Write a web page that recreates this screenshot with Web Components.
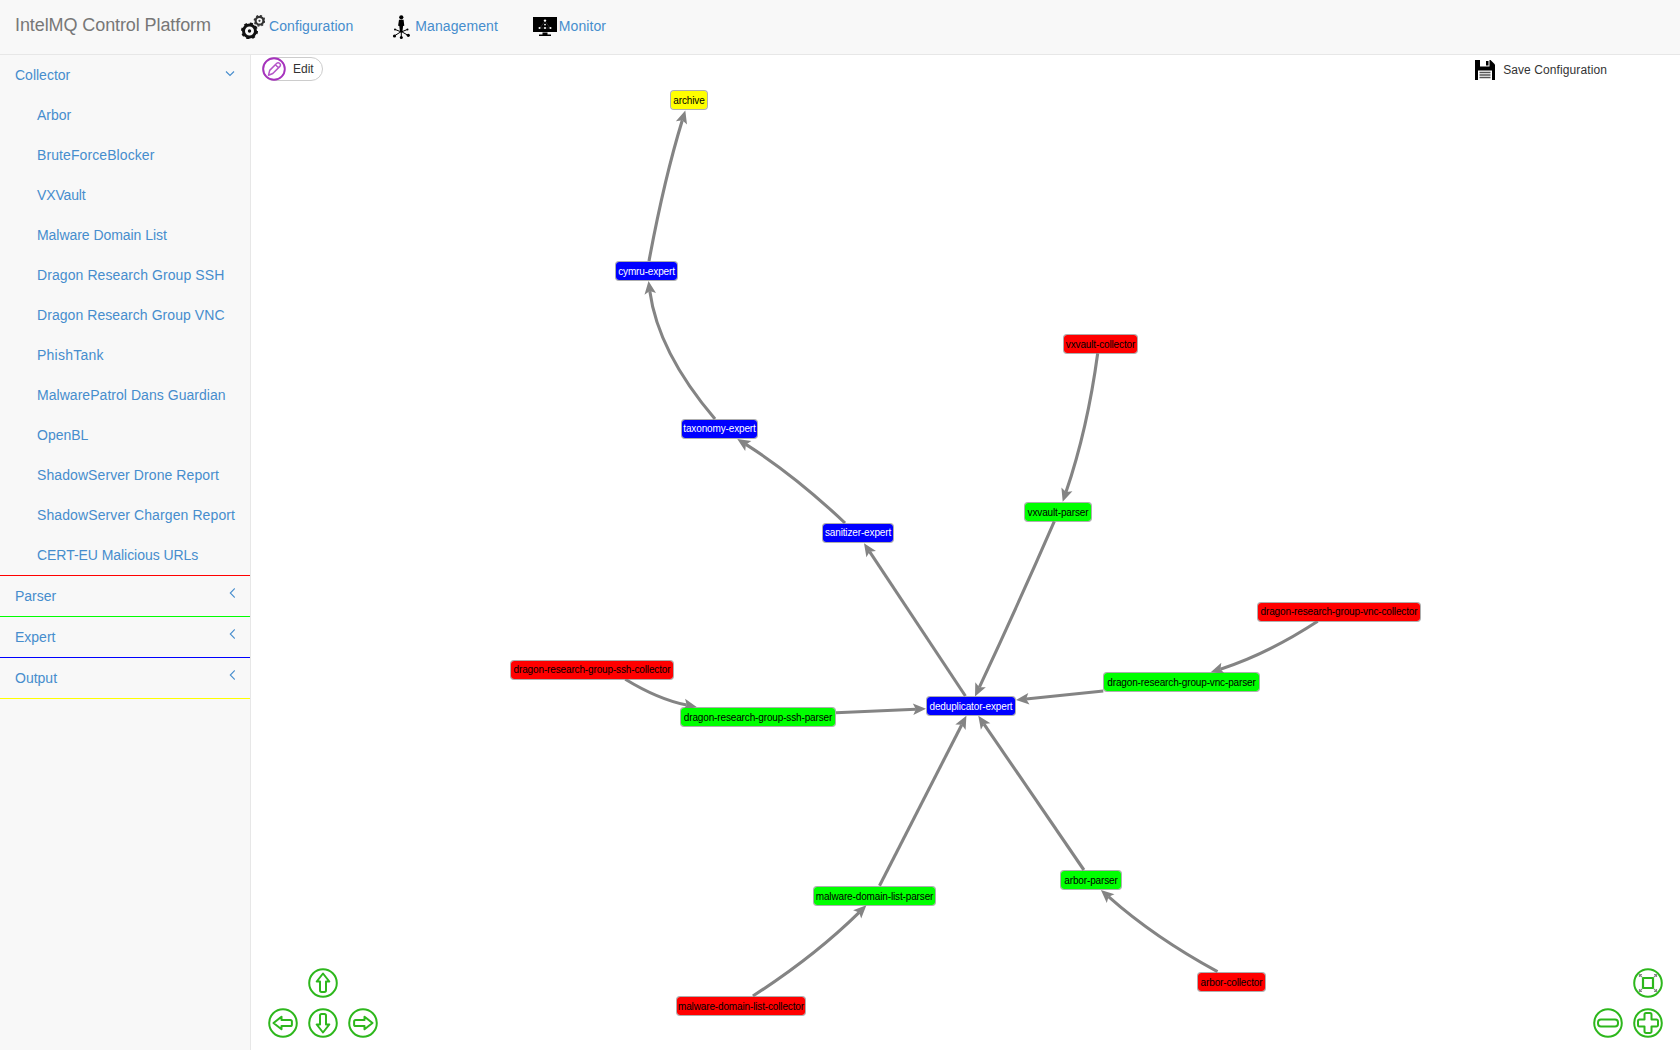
<!DOCTYPE html>
<html>
<head>
<meta charset="utf-8">
<title>IntelMQ Control Platform</title>
<style>
  html, body { margin: 0; height: 100%; background: #fff; overflow: hidden; }
  body { font: 14px/20px "Liberation Sans", Arial, sans-serif; color: #333; }
</style>
</head>
<body>
<app-shell>
  <top-navbar slot="top" brand="IntelMQ Control Platform">
    <nav-link width="24">
      <svg slot="icon" width="24" height="24" viewBox="0 0 24 24">
        <g fill="none" transform="translate(.5 0)">
          <circle cx="8" cy="16" r="6" stroke="#111" stroke-width="3"/>
          <circle cx="8" cy="16" r="7.6" stroke="#111" stroke-width="1.8" stroke-dasharray="3 3"/>
          <circle cx="8" cy="16" r="1.7" fill="#111"/>
          <circle cx="18" cy="5.8" r="3.9" stroke="#333" stroke-width="2.2"/>
          <circle cx="18" cy="5.8" r="5.2" stroke="#333" stroke-width="1.4" stroke-dasharray="2 2.08"/>
          <circle cx="18" cy="5.8" r="1.1" fill="#444"/>
        </g>
      </svg>
      Configuration
    </nav-link>
    <nav-link width="28">
      <svg slot="icon" width="29" height="24" viewBox="0 0 29 24">
        <g transform="translate(2 0)">
          <circle cx="16.3" cy="2.3" r="2.1" fill="#000"/>
          <path d="M14 4.8h4.6l.7 6-1.2.3-.7 6h-2.4l-.7-6-1.2-.3z" fill="#000"/>
          <path d="M16.3 16.5 10 20.5M16.3 16.5V22.5M16.3 16.5 22.5 20M16.3 17 10.5 14.6M16.3 17 22 14.6" stroke="#000" stroke-width="1" fill="none"/>
          <g fill="#000">
            <circle cx="9.5" cy="21" r="1.6"/><circle cx="16.3" cy="22.4" r="1.5"/><circle cx="23.3" cy="20.3" r="1.6"/>
            <circle cx="10" cy="14.6" r="1"/><circle cx="22.5" cy="14.4" r="1"/>
          </g>
        </g>
      </svg>
      Management
    </nav-link>
    <nav-link width="27">
      <svg slot="icon" width="29" height="24" viewBox="0 0 29 24">
        <rect x="5" y="2" width="24" height="15" fill="#000"/>
        <path d="M14.5 17.5h5v2h3.5v1.5H11V19.5h3.5z" fill="#000"/>
        <path d="M17 6 12 13M17 6 22 13M12 13H22" stroke="#444" stroke-width=".6"/>
        <g fill="#fff">
          <circle cx="17" cy="5.6" r="1.2"/><circle cx="17" cy="9.6" r=".9"/>
          <circle cx="11.5" cy="13" r="1"/><circle cx="17" cy="13" r="1"/><circle cx="22.5" cy="13" r="1"/>
        </g>
      </svg>
      Monitor
    </nav-link>
  </top-navbar>

  <side-menu slot="side">
    <menu-group label="Collector" color="#ff0000" open>
      <menu-item>Arbor</menu-item>
      <menu-item track=".09">BruteForceBlocker</menu-item>
      <menu-item track="-.15">VXVault</menu-item>
      <menu-item track="-.05">Malware Domain List</menu-item>
      <menu-item track=".085">Dragon Research Group SSH</menu-item>
      <menu-item track=".065">Dragon Research Group VNC</menu-item>
      <menu-item track=".23">PhishTank</menu-item>
      <menu-item track=".04">MalwarePatrol Dans Guardian</menu-item>
      <menu-item>OpenBL</menu-item>
      <menu-item track=".085">ShadowServer Drone Report</menu-item>
      <menu-item track=".1">ShadowServer Chargen Report</menu-item>
      <menu-item track="-.05">CERT-EU Malicious URLs</menu-item>
    </menu-group>
    <menu-group label="Parser" color="#00ff00"></menu-group>
    <menu-group label="Expert" color="#0000ff"></menu-group>
    <menu-group label="Output" color="#ffff00"></menu-group>
  </side-menu>

  <network-canvas slot="main">
    <graph-node box="670,90,38,20" kind="output">archive</graph-node>
    <graph-node box="615,261,63,20" kind="expert">cymru-expert</graph-node>
    <graph-node box="681,419,77,20" kind="expert" flush>taxonomy-expert</graph-node>
    <graph-node box="822,523,72,20" kind="expert" flush>sanitizer-expert</graph-node>
    <graph-node box="926,696,90,20" kind="expert">deduplicator-expert</graph-node>
    <graph-node box="1063,334,75,20" kind="collector">vxvault-collector</graph-node>
    <graph-node box="1024,502,68,20" kind="parser">vxvault-parser</graph-node>
    <graph-node box="1257,602,164,20" kind="collector" flush>dragon-research-group-vnc-collector</graph-node>
    <graph-node box="1103,672,157,20" kind="parser">dragon-research-group-vnc-parser</graph-node>
    <graph-node box="510,660,164,20" kind="collector" flush>dragon-research-group-ssh-collector</graph-node>
    <graph-node box="680,707,156,20" kind="parser">dragon-research-group-ssh-parser</graph-node>
    <graph-node box="813,886,123,20" kind="parser">malware-domain-list-parser</graph-node>
    <graph-node box="676,996,130,20" kind="collector">malware-domain-list-collector</graph-node>
    <graph-node box="1060,870,62,20" kind="parser">arbor-parser</graph-node>
    <graph-node box="1197,972,69,20" kind="collector">arbor-collector</graph-node>

    <edit-pill slot="overlay"></edit-pill>
    <save-action slot="overlay"></save-action>

    <control-pad slot="overlay" side="left">
      <span></span><round-btn icon="up"></round-btn><span></span>
      <round-btn icon="left"></round-btn><round-btn icon="down"></round-btn><round-btn icon="right"></round-btn>
    </control-pad>
    <control-pad slot="overlay" side="right">
      <span></span><round-btn icon="fit"></round-btn>
      <round-btn icon="minus"></round-btn><round-btn icon="plus"></round-btn>
    </control-pad>
  </network-canvas>
</app-shell>

<script>
class AppShell extends HTMLElement {
  constructor() {
    super();
    this.attachShadow({ mode: 'open' }).innerHTML = `
      <style>
        :host { display: flex; flex-direction: column; width: 1680px; height: 1050px; overflow: hidden; }
        .body { display: flex; flex: 1; min-height: 0; }
        ::slotted([slot=side]) { flex: none; }
        ::slotted([slot=main]) { flex: 1; }
      </style>
      <slot name="top"></slot>
      <div class="body"><slot name="side"></slot><slot name="main"></slot></div>`;
  }
}

class TopNavbar extends HTMLElement {
  constructor() {
    super();
    this.attachShadow({ mode: 'open' }).innerHTML = `
      <style>
        :host { display: flex; height: 54px; background: #f8f8f8; border-bottom: 1px solid #e7e7e7; }
        .brand { width: 196px; padding: 15px; font-size: 18px; line-height: 20px; color: #777; white-space: nowrap; letter-spacing: -.09px; }
        nav { display: flex; }
      </style>
      <div class="brand"></div>
      <nav><slot></slot></nav>`;
    this.shadowRoot.querySelector('.brand').textContent = this.getAttribute('brand');
  }
}

class NavLink extends HTMLElement {
  constructor() {
    super();
    const w = this.getAttribute('width') || 24;
    this.attachShadow({ mode: 'open' }).innerHTML = `
      <style>
        :host { display: flex; padding: 15px 15px 0; height: 39px; color: #468dcd; font-size: 14px; line-height: 20px; white-space: nowrap; letter-spacing: .08px; }
        .ico { width: ${w}px; height: 24px; margin-right: 4px; flex: none; }
        .txt { padding-top: 1px; }
      </style>
      <div class="ico"><slot name="icon"></slot></div>
      <div class="txt"><slot></slot></div>`;
  }
}

class SideMenu extends HTMLElement {
  constructor() {
    super();
    this.attachShadow({ mode: 'open' }).innerHTML = `
      <style>
        :host { display: block; width: 250px; background: #f8f8f8; border-right: 1px solid #e7e7e7; }
      </style>
      <slot></slot>`;
  }
}

class MenuGroup extends HTMLElement {
  constructor() {
    super();
    const open = this.hasAttribute('open');
    const arrow = open
      ? '<path d="M1 1.5 5 5.5 9 1.5"/>'
      : '<path d="M6.8 .5 2.3 5 6.8 9.5"/>';
    this.attachShadow({ mode: 'open' }).innerHTML = `
      <style>
        :host { display: block; border-bottom: 1px solid ${this.getAttribute('color')}; }
        .head { display: flex; justify-content: space-between; height: 20px; padding: 10px 15px; color: #468dcd; }
        svg { margin-top: ${open ? 5 : 2}px; fill: none; stroke: #468dcd; stroke-width: 1.1; }
        .list { display: ${open ? 'block' : 'none'}; }
      </style>
      <div class="head">
        <span class="label"></span>
        <svg width="${open ? 10 : 7}" height="${open ? 7 : 10}" viewBox="0 0 ${open ? '10 7' : '7 10'}">${arrow}</svg>
      </div>
      <div class="list"><slot></slot></div>`;
    this.shadowRoot.querySelector('.label').textContent = this.getAttribute('label');
  }
}

class MenuItem extends HTMLElement {
  constructor() {
    super();
    const track = this.getAttribute('track') || '0';
    this.attachShadow({ mode: 'open' }).innerHTML = `
      <style>
        :host { display: block; height: 20px; padding: 10px 15px 10px 37px; color: #468dcd; white-space: nowrap; letter-spacing: ${track}px; }
      </style>
      <slot></slot>`;
  }
}

// edges in page coordinates: start, control (null = straight), arrow tip
const EDGES = [
  [[649, 261], [664, 180], [685.3, 110.5]],
  [[715, 419], [658, 352], [648.5, 281]],
  [[845, 523], [795, 475.6], [737.3, 439]],
  [[965.4, 696], null, [864, 543.3]],
  [[1054.3, 521.3], [1016.5, 608], [975, 696.5]],
  [[1097.7, 353.3], [1087.5, 429.2], [1062.7, 501.7]],
  [[1103.3, 691], null, [1016, 700]],
  [[1317.7, 621.3], [1267.5, 654], [1210.7, 672.3]],
  [[836, 712.7], null, [926, 708.7]],
  [[625.3, 679.3], [658.4, 699.5], [696.7, 707]],
  [[879.5, 885.7], null, [966.4, 715.7]],
  [[1083.9, 870], null, [978.3, 715.7]],
  [[752.9, 996], [814.3, 956.5], [866.4, 905.3]],
  [[1217.5, 971.7], [1154.4, 937.5], [1100.9, 890]],
];
const ORIGIN = [251, 55];

function edgeMarkup([a, c, b]) {
  const ctrl = c || a;
  const dx = b[0] - ctrl[0], dy = b[1] - ctrl[1];
  const len = Math.hypot(dx, dy);
  const ux = dx / len, uy = dy / len;
  const L = 13, W = 5.8;
  const back = [b[0] - ux * L, b[1] - uy * L];
  const notch = [b[0] - ux * L * 0.78, b[1] - uy * L * 0.78];
  const p1 = [back[0] - uy * W, back[1] + ux * W];
  const p2 = [back[0] + uy * W, back[1] - ux * W];
  const fmt = (p) => p[0].toFixed(1) + ' ' + p[1].toFixed(1);
  const d = c
    ? `M${fmt(a)} Q${fmt(c)} ${fmt(notch)}`
    : `M${fmt(a)} L${fmt(notch)}`;
  return `<path d="${d}" fill="none" stroke="#848484" stroke-width="3.1"/>
    <path d="M${fmt(b)} L${fmt(p1)} L${fmt(notch)} L${fmt(p2)}Z" fill="#848484"/>`;
}

class NetworkCanvas extends HTMLElement {
  constructor() {
    super();
    this.attachShadow({ mode: 'open' }).innerHTML = `
      <style>
        :host { display: block; position: relative; background: #fff; overflow: hidden; }
        svg { position: absolute; left: 0; top: 0; }
      </style>
      <svg width="1429" height="995" viewBox="${ORIGIN[0]} ${ORIGIN[1]} 1429 995">${EDGES.map(edgeMarkup).join('')}</svg>
      <slot></slot>
      <slot name="overlay"></slot>`;
  }
}

const NODE_COLORS = {
  collector: ['#ff0000', '#000'],
  parser: ['#00ff00', '#000'],
  expert: ['#0000ff', '#fff'],
  output: ['#ffff00', '#000'],
};

class GraphNode extends HTMLElement {
  constructor() {
    super();
    const [x, y, w, h] = this.getAttribute('box').split(',').map(Number);
    const [bg, fg] = NODE_COLORS[this.getAttribute('kind')];
    const nudge = this.hasAttribute('flush') ? 0 : 1;
    this.attachShadow({ mode: 'open' }).innerHTML = `
      <style>
        :host {
          position: absolute; box-sizing: border-box; display: flex; align-items: center; justify-content: center;
          left: ${x - ORIGIN[0]}px; top: ${y - ORIGIN[1]}px; width: ${w}px; height: ${h}px; padding-top: ${nudge}px;
          background: ${bg}; color: ${fg}; border: 1px solid rgba(130,130,130,.65); border-radius: 4px;
          background-clip: padding-box;
          font: 10px/12px "Liberation Sans", Arial, sans-serif; letter-spacing: -.14px; white-space: nowrap;
        }
      </style>
      <slot></slot>`;
  }
}

class EditPill extends HTMLElement {
  constructor() {
    super();
    this.attachShadow({ mode: 'open' }).innerHTML = `
      <style>
        :host {
          position: absolute; left: 11px; top: 2px; box-sizing: border-box; width: 61px; height: 24px;
          display: flex; align-items: center; background: #fff; border: 1px solid #ccc; border-radius: 12px;
          font-size: 12px; color: #333;
        }
        svg { position: absolute; left: -1px; top: -1px; }
        span { margin-left: 30px; }
      </style>
      <svg width="24" height="24" viewBox="0 0 24 24">
        <circle cx="12" cy="12" r="10.8" fill="#fff" stroke="#a632bd" stroke-width="1.9"/>
        <path d="M6.5 18.3 7.7 13.4 14.8 6.3a1.8 1.8 0 0 1 2.6 0l.5.5a1.8 1.8 0 0 1 0 2.6l-7.1 7.1zM13.4 7.7 16.5 10.8" fill="none" stroke="#b455c8" stroke-width="1.5" stroke-linejoin="round"/>
      </svg>
      <span>Edit</span>`;
  }
}

class SaveAction extends HTMLElement {
  constructor() {
    super();
    this.attachShadow({ mode: 'open' }).innerHTML = `
      <style>
        :host {
          position: absolute; right: 73px; top: 5px; display: flex; align-items: center; gap: 8px;
          font-size: 12px; line-height: 20px; color: #333; white-space: nowrap;
        }
        span { letter-spacing: .1px; }
      </style>
      <svg width="20" height="20" viewBox="0 0 20 20">
        <path d="M0 0H15.5L20 4.5V20H0z" fill="#000"/>
        <path d="M5 0H14.5V6.5H5z" fill="#fff"/>
        <path d="M11 1H13.5V5.5H11z" fill="#000"/>
        <path d="M3 10.5H17V20H3z" fill="#fff"/>
        <path d="M4.5 12.5H15.5M4.5 15H15.5M4.5 17.5H15.5" stroke="#555" stroke-width="1.4"/>
      </svg>
      <span>Save Configuration</span>`;
  }
}

class ControlPad extends HTMLElement {
  constructor() {
    super();
    const left = this.getAttribute('side') === 'left';
    this.attachShadow({ mode: 'open' }).innerHTML = `
      <style>
        :host {
          position: absolute; bottom: 12px; ${left ? 'left: 17px' : 'right: 17px'};
          display: grid; grid-template-columns: repeat(${left ? 3 : 2}, 30px); gap: 10px;
        }
      </style>
      <slot></slot>`;
  }
}

const G = '#2db71c';
const ARROW = 'M15 5.5 21.3 13.5H18V22.3a1.6 1.6 0 0 1-1.6 1.6H13.6A1.6 1.6 0 0 1 12 22.3V13.5H8.7Z';
const ROUND_ICONS = {
  up: `<path d="${ARROW}"/>`,
  down: `<path d="${ARROW}" transform="rotate(180 15 15)"/>`,
  left: `<path d="${ARROW}" transform="rotate(-90 15 15)"/>`,
  right: `<path d="${ARROW}" transform="rotate(90 15 15)"/>`,
  minus: `<rect x="5" y="11.5" width="20" height="7" rx="3"/>`,
  plus: `<path d="M11.5 6.5a1.5 1.5 0 0 1 1.5-1.5h4a1.5 1.5 0 0 1 1.5 1.5V11.5H23.5a1.5 1.5 0 0 1 1.5 1.5v4a1.5 1.5 0 0 1-1.5 1.5H18.5V23.5a1.5 1.5 0 0 1-1.5 1.5h-4a1.5 1.5 0 0 1-1.5-1.5V18.5H6.5a1.5 1.5 0 0 1-1.5-1.5v-4a1.5 1.5 0 0 1 1.5-1.5H11.5Z"/>`,
  fit: `<rect x="10" y="10" width="10" height="10" stroke-width="2.2"/>
    <path d="M6.5 6.5 9 9M23.5 6.5 21 9M6.5 23.5 9 21M23.5 23.5 21 21M6.5 9V6.5H9M23.5 9V6.5H21M6.5 21V23.5H9M23.5 21V23.5H21" stroke="#888" stroke-width="1.2"/>`,
};

class RoundBtn extends HTMLElement {
  constructor() {
    super();
    this.attachShadow({ mode: 'open' }).innerHTML = `
      <style>
        :host { display: block; width: 30px; height: 30px; }
        svg { display: block; fill: none; stroke: ${G}; stroke-width: 2; stroke-linejoin: round; }
      </style>
      <svg width="30" height="30" viewBox="0 0 30 30">
        <circle cx="15" cy="15" r="13.8"/>
        ${ROUND_ICONS[this.getAttribute('icon')]}
      </svg>`;
  }
}

customElements.define('app-shell', AppShell);
customElements.define('top-navbar', TopNavbar);
customElements.define('nav-link', NavLink);
customElements.define('side-menu', SideMenu);
customElements.define('menu-group', MenuGroup);
customElements.define('menu-item', MenuItem);
customElements.define('network-canvas', NetworkCanvas);
customElements.define('graph-node', GraphNode);
customElements.define('edit-pill', EditPill);
customElements.define('save-action', SaveAction);
customElements.define('control-pad', ControlPad);
customElements.define('round-btn', RoundBtn);
</script>
</body>
</html>
